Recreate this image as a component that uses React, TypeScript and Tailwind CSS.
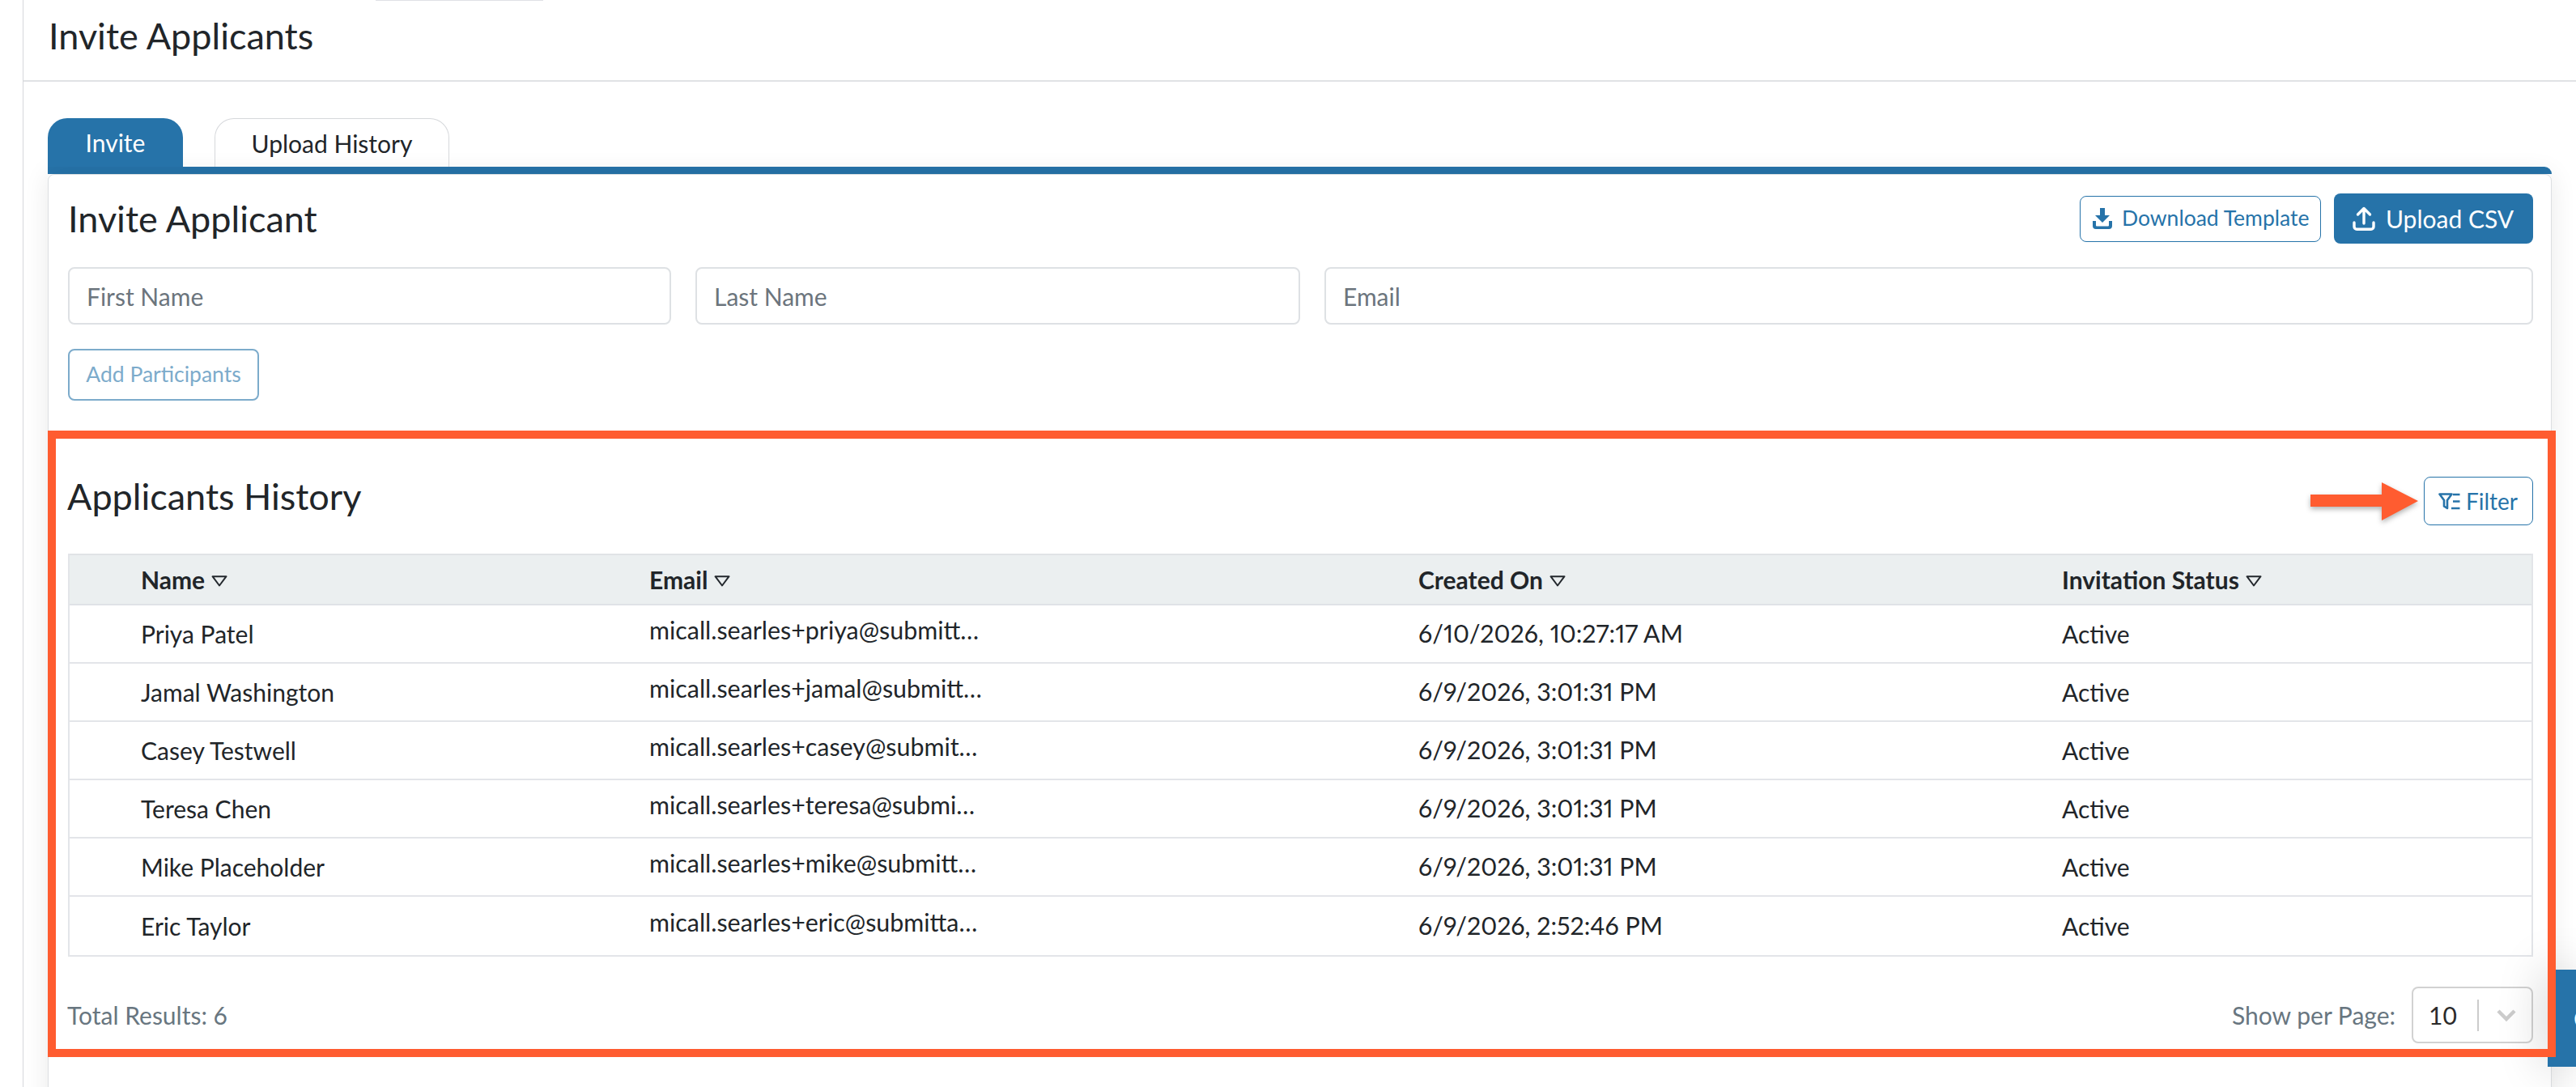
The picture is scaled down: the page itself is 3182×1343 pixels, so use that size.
import React from "react";

const rows = [
  ["Priya Patel", "micall.searles+priya@submitt…", "6/10/2026, 10:27:17 AM"],
  ["Jamal Washington", "micall.searles+jamal@submitt…", "6/9/2026, 3:01:31 PM"],
  ["Casey Testwell", "micall.searles+casey@submit…", "6/9/2026, 3:01:31 PM"],
  ["Teresa Chen", "micall.searles+teresa@submi…", "6/9/2026, 3:01:31 PM"],
  ["Mike Placeholder", "micall.searles+mike@submitt…", "6/9/2026, 3:01:31 PM"],
  ["Eric Taylor", "micall.searles+eric@submitta…", "6/9/2026, 2:52:46 PM"],
];

function SortMark() {
  return (
    <svg width="20" height="14" viewBox="0 0 20 14" className="ml-[8px] mt-[4px] shrink-0" fill="none" stroke="#23282d" strokeWidth="2">
      <path d="M1.5 1.2h17L10 12.5z" strokeLinejoin="round" />
    </svg>
  );
}

function DownloadIcon() {
  return (
    <svg width="24" height="26" viewBox="0 0 24 26" fill="#2673a9" className="shrink-0">
      <path d="M9 0h6v9h6l-9 9-9-9h6z" />
      <path d="M0 16h4v5.5a1 1 0 0 0 1 1h14a1 1 0 0 0 1-1V16h4v6a4 4 0 0 1-4 4H4a4 4 0 0 1-4-4z" />
    </svg>
  );
}

function UploadIcon() {
  return (
    <svg width="28" height="30" viewBox="0 0 28 30" fill="none" stroke="#fff" strokeWidth="3.4" strokeLinecap="round" strokeLinejoin="round" className="shrink-0">
      <path d="M14 21V3M6.5 10 14 2.5 21.5 10" />
      <path d="M2 20v5a3.2 3.2 0 0 0 3.2 3.2h17.6A3.2 3.2 0 0 0 26 25v-5" />
    </svg>
  );
}

function FilterIcon() {
  return (
    <svg width="27" height="21" viewBox="0 0 27 21" fill="none" stroke="#2673a9" strokeWidth="2.6" className="shrink-0">
      <path d="M1.5 1.5h15l-5.5 7.5v10l-4-2.5V9z" strokeLinejoin="round" />
      <path d="M18 2h8.5M18 10.5h8.5M16 19h10.5" />
    </svg>
  );
}

export default function App() {
  return (
    <div className="relative h-[1343px] w-full overflow-hidden bg-white font-['Lato','Liberation_Sans',sans-serif] text-[#212529]">
      <div className="absolute left-[464px] top-0 h-px w-[207px] bg-[#dfe1e6]" />
      <div className="ml-[28px] flex h-full flex-col border-l border-[#d6d8db]">
        <header className="flex h-[101px] shrink-0 items-start border-b-2 border-[#e0e2e5] pl-[31px]">
          <h1 className="mt-[15px] text-[45px] font-normal leading-[58px]">Invite Applicants</h1>
        </header>
        <main className="mr-[30px] pl-[30px] pt-[45px]">
          <div className="flex h-[60px] items-end gap-[39px] text-[30px] leading-none">
            <div className="flex h-[60px] w-[167px] items-center justify-center rounded-t-[24px] bg-[#2673a9] text-white">Invite</div>
            <div className="flex h-[60px] w-[290px] items-center justify-center rounded-t-[24px] border border-b-0 border-[#d6d8db]">Upload History</div>
          </div>
          <div className="h-[9px] rounded-tr-[10px] bg-[#2673a9]" />
          <section className="h-[1200px] rounded-t-[8px] border border-[#dcdfe2] bg-white shadow-[0_0_32px_rgba(0,0,0,0.09)]">
            <div className="flex items-center justify-between pl-[24px] pr-[22px] pt-[23px]">
              <h2 className="text-[45px] font-normal leading-[62px]">Invite Applicant</h2>
              <div className="flex items-center gap-[16px]">
                <button className="flex h-[57px] w-[298px] items-center gap-[12px] rounded-[8px] border border-[#2673a9] pl-[15px] text-[26.5px] text-[#2673a9]">
                  <DownloadIcon />
                  Download Template
                </button>
                <button className="flex h-[62px] w-[246px] items-center gap-[13px] rounded-[8px] bg-[#2673a9] pl-[23px] text-[30px] text-white">
                  <UploadIcon />
                  Upload CSV
                </button>
              </div>
            </div>
            <div className="mt-[29px] flex gap-[30px] pl-[24px] pr-[22px] text-[30px] text-[#6c757d]">
              <div className="flex h-[71px] w-[745px] items-center rounded-[8px] border-2 border-[#dee1e4] pl-[21px] pt-[2px]">First Name</div>
              <div className="flex h-[71px] w-[747px] items-center rounded-[8px] border-2 border-[#dee1e4] pl-[21px] pt-[2px]">Last Name</div>
              <div className="flex h-[71px] flex-1 items-center rounded-[8px] border-2 border-[#dee1e4] pl-[21px] pt-[2px]">Email</div>
            </div>
            <button className="ml-[24px] mt-[30px] flex h-[64px] w-[236px] items-center justify-center rounded-[8px] border-2 border-[#7cabcb] text-[26.5px] text-[#7cabcb]">
              Add Participants
            </button>
            <div className="relative -ml-px -mr-[6px] mt-[37px] h-[774px] border-[10px] border-transparent bg-white pl-[15px] pr-[18px] [background-clip:padding-box]">
              <div className="pointer-events-none absolute -inset-[10px] z-10 border-[10px] border-[#ff5c30]" />
              <div className="flex h-[142px] items-center justify-between">
                <h2 className="-ml-px text-[45px] font-normal leading-[62px]">Applicants History</h2>
                <div className="mt-[12px] flex items-center gap-[7px]">
                  <svg width="133" height="47" viewBox="0 0 133 47" className="shrink-0 drop-shadow-[0_3px_3px_rgba(0,0,0,0.3)]">
                    <path d="M0 15h88V0l45 23-45 24V30H0z" fill="#ff5c30" />
                  </svg>
                  <button className="flex h-[60px] w-[135px] items-center gap-[7px] rounded-[8px] border border-[#2673a9] pl-[17px] text-[28px] text-[#2673a9]">
                    <FilterIcon />
                    Filter
                  </button>
                </div>
              </div>
              <div className="border-x-2 border-b-2 border-[#e3e5e9]">
                <div className="grid h-[64px] grid-cols-[716px_950px_795px_1fr] items-center border-y-2 border-t-[#e0e3e6] border-b-[#dfe2e7] bg-[#ebeff0] text-[30px] font-bold leading-none">
                  {["Name", "Email", "Created On", "Invitation Status"].map((h, i) => (
                    <div key={h} className={i === 0 ? "flex items-center pl-[88px]" : "flex items-center"}>
                      {h}
                      <SortMark />
                    </div>
                  ))}
                </div>
                {rows.map((r, i) => (
                  <div
                    key={r[0]}
                    className={
                      i === 5
                        ? "grid h-[72px] grid-cols-[716px_950px_795px_1fr] items-center text-[30px]"
                        : "grid h-[72px] grid-cols-[716px_950px_795px_1fr] items-center border-b-2 border-[#e3e5e9] text-[30px]"
                    }
                  >
                    <div className="pl-[88px]">{r[0]}</div>
                    <div className="mb-[8px] text-[30.4px]">{r[1]}</div>
                    <div className="text-[30.4px] proportional-nums">{r[2]}</div>
                    <div>Active</div>
                  </div>
                ))}
              </div>
              <div className="mt-[37px] flex items-center justify-between text-[30px] text-[#687680]">
                <span className="-ml-px">Total Results: 6</span>
                <div className="flex items-center gap-[20px]">
                  <span>Show per Page:</span>
                  <div className="flex h-[70px] w-[150px] items-center rounded-[8px] border-2 border-[#d2d2d2]">
                    <span className="w-[79px] pl-[19px] text-[#2b2b2b]">10</span>
                    <span className="h-[39px] w-[2px] bg-[#cccccc]" />
                    <svg width="24" height="16" viewBox="0 0 24 16" fill="none" stroke="#cccccc" strokeWidth="4.5" className="ml-[22px]">
                      <path d="M2 3l10 10L22 3" />
                    </svg>
                  </div>
                </div>
              </div>
            </div>
          </section>
        </main>
      </div>
      <div className="absolute right-0 top-[1198px] z-[1] flex h-[120px] w-[35px] items-center overflow-hidden bg-[#2673a9] pl-[32px] text-[30px] leading-none text-white shadow-[0_0_60px_rgba(0,0,0,0.22)]">
        C
      </div>
    </div>
  );
}
